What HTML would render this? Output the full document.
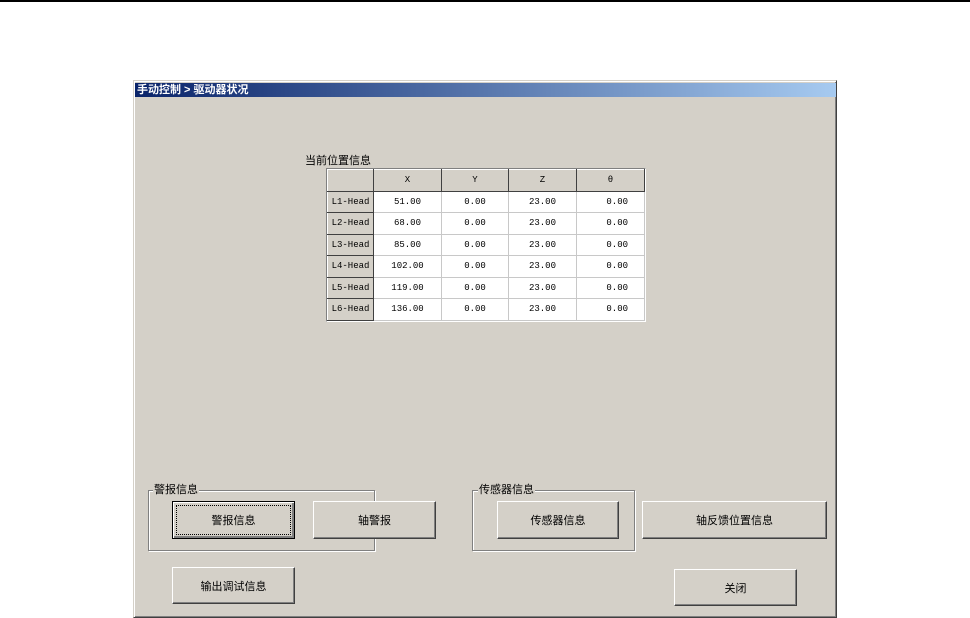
<!DOCTYPE html>
<html><head><meta charset="utf-8"><style>
body{margin:0;width:970px;height:618px;background:#fff;position:relative;overflow:hidden;font-family:"Liberation Sans","Noto Sans CJK SC","WenQuanYi Zen Hei",sans-serif;font-size:11px;color:#000}
.a{position:absolute}
.win{left:133px;top:80px;width:702px;height:536px;background:#d4d0c8;border:1px solid #d4d0c8;border-right-color:#404040;border-bottom-color:#404040;box-shadow:inset 1px 1px #fff,inset -1px -1px #808080}
.title{left:135px;top:83px;width:701px;height:14px;background:linear-gradient(to right,#0a246a,#a6caf0);color:#fff;font-weight:bold;font-size:11px;line-height:14px;padding-left:2px;box-sizing:border-box}
.btn{background:#d4d0c8;border:1px solid;border-color:#fff #404040 #404040 #fff;box-shadow:inset -1px -1px #808080;display:flex;align-items:center;justify-content:center;box-sizing:border-box;font-size:11px}
.grp{border:1px solid #808080;box-shadow:1px 1px #fff,inset 1px 1px #fff;box-sizing:border-box}
.lg{background:#d4d0c8;padding:0 1px;font-size:11px;line-height:12px}
table{border-collapse:collapse;font-family:"Liberation Mono",monospace;font-size:9px}
td{height:20.5px;border:1px solid #c8c8c8;background:#fff;text-align:center;padding:0}
td.h{background:#d4d0c8;border:1px solid;border-color:#fff #404040 #404040 #fff}
</style></head><body>
<div class="a" style="left:0;top:0;width:970px;height:2px;background:#000"></div>
<div class="a win"></div>
<div class="a title">手动控制 &gt; 驱动器状况</div>
<div class="a" style="left:305px;top:152px;font-size:11px">当前位置信息</div>
<div class="a" style="left:326px;top:168px;border:1px solid;border-color:#808080 #fff #fff #808080;">
<table>
<tr><td class="h" style="width:45px"></td><td class="h" style="width:67px">X</td><td class="h" style="width:66px">Y</td><td class="h" style="width:67px">Z</td><td class="h" style="width:67px">θ</td></tr>
<tr><td class="h">L1-Head</td><td>51.00</td><td>0.00</td><td>23.00</td><td style="text-align:right;padding-right:16px">0.00</td></tr>
<tr><td class="h">L2-Head</td><td>68.00</td><td>0.00</td><td>23.00</td><td style="text-align:right;padding-right:16px">0.00</td></tr>
<tr><td class="h">L3-Head</td><td>85.00</td><td>0.00</td><td>23.00</td><td style="text-align:right;padding-right:16px">0.00</td></tr>
<tr><td class="h">L4-Head</td><td>102.00</td><td>0.00</td><td>23.00</td><td style="text-align:right;padding-right:16px">0.00</td></tr>
<tr><td class="h">L5-Head</td><td>119.00</td><td>0.00</td><td>23.00</td><td style="text-align:right;padding-right:16px">0.00</td></tr>
<tr><td class="h">L6-Head</td><td>136.00</td><td>0.00</td><td>23.00</td><td style="text-align:right;padding-right:16px">0.00</td></tr>
</table></div>
<div class="a grp" style="left:148px;top:490px;width:227px;height:61px"></div>
<div class="a lg" style="left:153px;top:484px">警报信息</div>
<div class="a grp" style="left:472px;top:490px;width:163px;height:61px"></div>
<div class="a lg" style="left:478px;top:484px">传感器信息</div>
<div class="a btn" style="left:172px;top:501px;width:123px;height:38px;border-color:#000;box-shadow:inset 1px 1px #fff,inset -2px -2px #808080"><span style="outline:1px dotted #000;position:absolute;left:4px;top:4px;right:4px;bottom:4px"></span>警报信息</div>
<div class="a btn" style="left:313px;top:501px;width:123px;height:38px">轴警报</div>
<div class="a btn" style="left:497px;top:501px;width:122px;height:38px">传感器信息</div>
<div class="a btn" style="left:642px;top:501px;width:185px;height:38px">轴反馈位置信息</div>
<div class="a btn" style="left:172px;top:567px;width:123px;height:37px">输出调试信息</div>
<div class="a btn" style="left:674px;top:569px;width:123px;height:37px">关闭</div>
</body></html>
